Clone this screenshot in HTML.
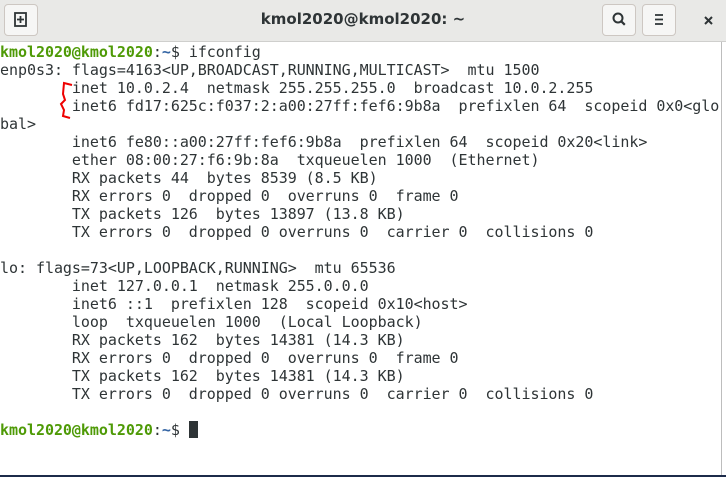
<!DOCTYPE html>
<html><head><meta charset="utf-8"><style>
html,body{margin:0;padding:0;width:726px;height:477px;overflow:hidden;background:#fff;font-family:"DejaVu Sans Mono","Liberation Mono",monospace}
.tb{position:absolute;left:0;top:0;width:726px;height:41px;background:#e9e9e7;border-bottom:1px solid #cfcfcd}
.btn{position:absolute;top:4px;width:34px;height:32px;border:1px solid #cdc7c2;border-radius:4px;background:#f6f6f5;box-sizing:border-box}
.title{position:absolute;left:0;width:726px;top:10px;text-align:center;font:bold 15px "DejaVu Sans","Liberation Sans",sans-serif;color:#2e3436}
pre{position:absolute;left:0;top:43px;margin:0;font-size:15px;letter-spacing:-0.04px;line-height:18px;color:#2e3436;font-family:"DejaVu Sans Mono","Liberation Mono",monospace}
.g{color:#4e9a06;font-weight:bold}.b{color:#3465a4;font-weight:bold}
.cur{display:inline-block;width:9px;height:17px;background:#2e3436;vertical-align:-3px}
.sb{position:absolute;left:721px;top:42px;width:1px;height:433px;background:#bdbdbd}
.bl{position:absolute;left:0;top:475px;width:726px;height:2px;background:#1c2b4a}
</style></head><body>
<div class="tb">
<div class="btn" style="left:4px"><svg width="32" height="30" viewBox="0 0 32 30"><rect x="10" y="8" width="11" height="13" fill="none" stroke="#2e3436" stroke-width="1.8"/><path d="M15.5 11v7M12 14.5h7" stroke="#2e3436" stroke-width="1.8"/></svg></div>
<div class="title">kmol2020@kmol2020: ~</div>
<div class="btn" style="left:602px"><svg width="32" height="30" viewBox="0 0 32 30"><circle cx="15" cy="13" r="4.5" fill="none" stroke="#2e3436" stroke-width="2"/><path d="M18.3 16.3l3.5 3.5" stroke="#2e3436" stroke-width="2.2"/></svg></div>
<div class="btn" style="left:642px"><svg width="32" height="30" viewBox="0 0 32 30"><path d="M12 10h8M12 14.5h8M12 19h8" stroke="#2e3436" stroke-width="1.8"/></svg></div>
<svg style="position:absolute;left:703px;top:15px" width="12" height="12"><path d="M2 2l7 7M9 2l-7 7" stroke="#2e3436" stroke-width="2"/></svg>
</div>
<pre><span class="g">kmol2020@kmol2020</span>:<span class="b">~</span>$ ifconfig
enp0s3: flags=4163&lt;UP,BROADCAST,RUNNING,MULTICAST&gt;  mtu 1500
        inet 10.0.2.4  netmask 255.255.255.0  broadcast 10.0.2.255
        inet6 fd17:625c:f037:2:a00:27ff:fef6:9b8a  prefixlen 64  scopeid 0x0&lt;glo
bal&gt;
        inet6 fe80::a00:27ff:fef6:9b8a  prefixlen 64  scopeid 0x20&lt;link&gt;
        ether 08:00:27:f6:9b:8a  txqueuelen 1000  (Ethernet)
        RX packets 44  bytes 8539 (8.5 KB)
        RX errors 0  dropped 0  overruns 0  frame 0
        TX packets 126  bytes 13897 (13.8 KB)
        TX errors 0  dropped 0 overruns 0  carrier 0  collisions 0

lo: flags=73&lt;UP,LOOPBACK,RUNNING&gt;  mtu 65536
        inet 127.0.0.1  netmask 255.0.0.0
        inet6 ::1  prefixlen 128  scopeid 0x10&lt;host&gt;
        loop  txqueuelen 1000  (Local Loopback)
        RX packets 162  bytes 14381 (14.3 KB)
        RX errors 0  dropped 0  overruns 0  frame 0
        TX packets 162  bytes 14381 (14.3 KB)
        TX errors 0  dropped 0 overruns 0  carrier 0  collisions 0

<span class="g">kmol2020@kmol2020</span>:<span class="b">~</span>$ <span class="cur"></span></pre>
<svg style="position:absolute;left:58px;top:80px" width="20" height="42"><path d="M14 5 L6 3 L5 14 L7 20 L3 24 L6 30 L5 36 L12 38" fill="none" stroke="#e00" stroke-width="2"/></svg>
<div class="sb"></div><div class="bl"></div>
</body></html>
